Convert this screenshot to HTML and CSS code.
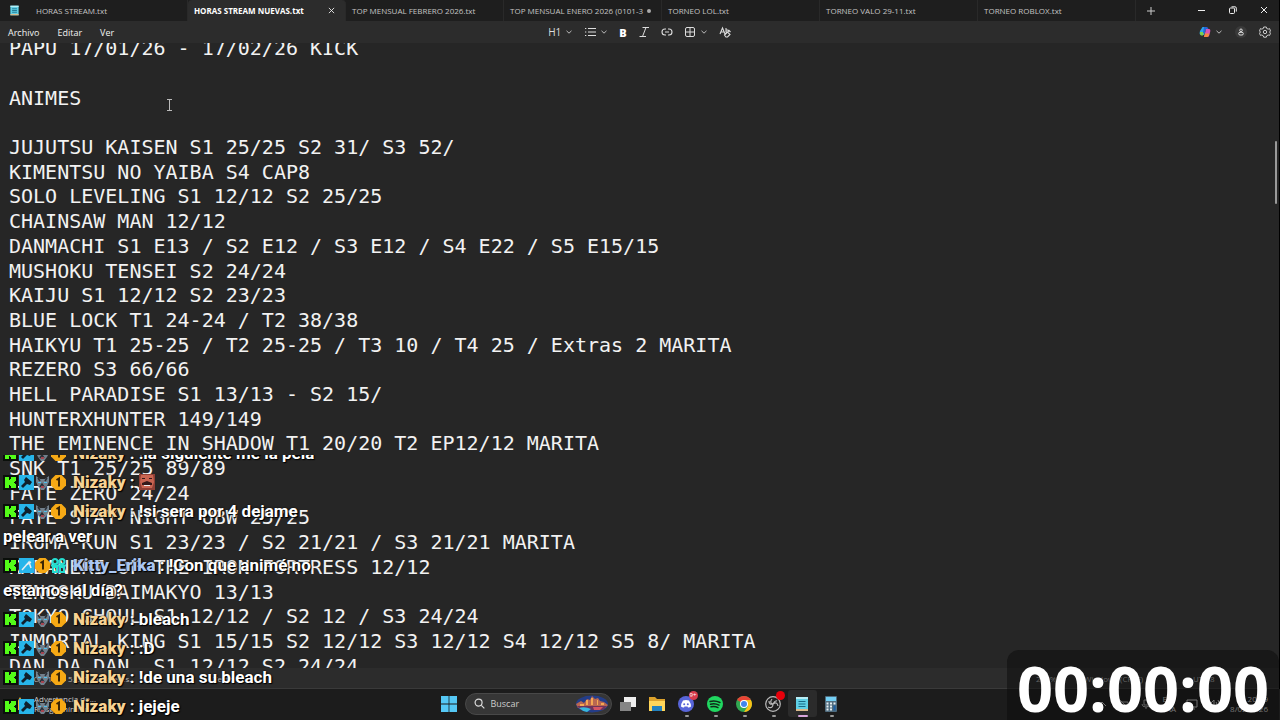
FILE: index.html
```html
<!DOCTYPE html>
<html lang="es">
<head>
    <meta charset="UTF-8">
    <meta name="viewport" content="width=device-width, initial-scale=1.0">
    <title>HORAS STREAM NUEVAS.txt</title>
    <link rel="stylesheet" href="styles.css">
</head>
<body>
    <!-- Shapes used more than once -->
    <svg class="defs" aria-hidden="true">
        <symbol id="chevron" viewBox="0 0 8 8"><path d="M1.5 2.8 4 5.2l2.5-2.4" fill="none" stroke="#bbb" stroke-width="1"/></symbol>
        <symbol id="notepad" viewBox="0 0 16 16">
            <path d="M2 1h12v14H2z" fill="#5fd0e6"/>
            <path d="M2 1h12v2H2z" fill="#b8eef6"/>
            <path d="M2 13h12v2H2z" fill="#d9b98a"/>
            <path d="M4.5 5.5h7M4.5 8h7M4.5 10.5h7" stroke="#176a86" stroke-width="1.2"/>
        </symbol>
        <symbol id="badge-kick" viewBox="0 0 15 15">
            <path d="M0 0h15v15H0z" fill="#0a0f0a"/>
            <path d="M2 2h4v3h1V4h1V2h5v4h-1v1h-1v1h1v1h1v4H8v-2H7v-1H6v3H2z" fill="#53fc18"/>
        </symbol>
        <symbol id="badge-mod" viewBox="0 0 15 15">
            <path d="M0 0h15v15H0z" fill="#27b5ea"/>
            <path d="m7 2 6 5-2 3-3-1-4 4-2-2 4-4-1-2z" fill="#10202c"/>
        </symbol>
        <symbol id="badge-sword" viewBox="0 0 15 15">
            <path d="M0 0h15v15H0z" fill="#27b5ea"/>
            <path d="M3 12 10 4l2 6M7 7l5-3" fill="none" stroke="#e5eef2" stroke-width="1.5"/>
        </symbol>
        <symbol id="badge-wolf" viewBox="0 0 15 15">
            <path d="m1 1 4 3h5l4-3v6l-2 4-3 4H6l-3-4-2-4z" fill="#72808c"/>
            <path d="m3 3 2 3M12 3l-2 3M5 12l2-3 2 3" fill="none" stroke="#2b3038" stroke-width="1.5"/>
            <path d="M3 7h3v1H3zM9 7h3v1H9z" fill="#4fc3ee"/>
            <path d="M6 11h3v2H6z" fill="#a54550"/>
        </symbol>
        <symbol id="badge-coin" viewBox="0 0 15 15">
            <path d="M4.500 0h6L15 4.500v6L10.500 15h-6L0 10.500v-6z" fill="#f6a915"/>
            <path d="M5.500 5 8 3.500v8" fill="none" stroke="#3b2605" stroke-width="2"/>
        </symbol>
        <symbol id="badge-group" viewBox="0 0 15 15">
            <g fill="none" stroke="#25ded0" stroke-width="2">
                <circle cx="4" cy="3.500" r="2.500"/><circle cx="11" cy="3.500" r="2.500"/>
                <path d="M0 7.500h15M2 9h4v5H2zM9 9h4v5H9z"/>
            </g>
        </symbol>
    </svg>

    <main class="window">
        <header class="tabs">
            <svg class="app-icon"><use href="#notepad"/></svg>
            <button class="tab">HORAS STREAM.txt</button>
            <button class="tab active">HORAS STREAM NUEVAS.txt
                <svg class="close" viewBox="0 0 8 8"><path d="m1 1 6 6M7 1 1 7" stroke="#eee" stroke-width="1"/></svg>
            </button>
            <button class="tab">TOP MENSUAL FEBRERO 2026.txt</button>
            <button class="tab">TOP MENSUAL ENERO 2026 (0101-3 <span class="unsaved"></span></button>
            <button class="tab">TORNEO LOL.txt</button>
            <button class="tab">TORNEO VALO 29-11.txt</button>
            <button class="tab">TORNEO ROBLOX.txt</button>
            <button class="new-tab" aria-label="Nueva"><svg viewBox="0 0 8 8"><path d="M4 0v8M0 4h8" stroke="#ccc"/></svg></button>
            <div class="controls">
                <button aria-label="Minimizar"><svg viewBox="0 0 8 8"><path d="M0 4.500h7" stroke="#eee"/></svg></button>
                <button aria-label="Restaurar"><svg viewBox="0 0 8 8"><rect x=".5" y="2" width="5" height="5.500" rx="1" fill="none" stroke="#eee"/><path d="M2.500 .8h3.500q1.300 0 1.300 1.300v3.500" fill="none" stroke="#eee"/></svg></button>
                <button aria-label="Cerrar"><svg viewBox="0 0 8 8"><path d="m1 1 6 6M7 1 1 7" stroke="#eee"/></svg></button>
            </div>
        </header>

        <nav class="toolbar">
            <div class="menus">
                <button>Archivo</button>
                <button>Editar</button>
                <button>Ver</button>
            </div>
            <div class="format">
                <button class="heading">H1 <svg class="chev"><use href="#chevron"/></svg></button>
                <button aria-label="Lista"><svg class="icon" viewBox="0 0 12 12"><path d="M4 2.500h8M4 6h8M4 9.500h8M1 2.500h1.300M1 6h1.300M1 9.500h1.300" stroke="#ddd" stroke-width="1"/></svg><svg class="chev"><use href="#chevron"/></svg></button>
                <button class="bold">B</button>
                <button aria-label="Cursiva"><svg class="icon" viewBox="0 0 12 12"><path d="M4.500 1.500H11M1.500 10.500H8M8 1.500l-3.500 9" stroke="#ddd" stroke-width="1"/></svg></button>
                <button aria-label="Vínculo"><svg class="icon" viewBox="0 0 12 12"><path d="M5 3H4a3 3 0 0 0 0 6h1M7 3h1a3 3 0 0 1 0 6H7M4 6h4" fill="none" stroke="#ddd" stroke-width="1.100"/></svg></button>
                <button aria-label="Tabla"><svg class="icon" viewBox="0 0 12 12"><rect x="1.500" y="1.500" width="9" height="9" rx="1.500" fill="none" stroke="#ddd"/><path d="M6 1.500v9M1.500 6h9" stroke="#ddd"/></svg><svg class="chev"><use href="#chevron"/></svg></button>
                <button aria-label="Borrar formato"><svg class="icon" viewBox="0 0 12 12"><path d="m1 8 2.500-6L6 8M2 6h3M7 2v4h1.500a1 1 0 0 0 0-2H7M9.500 4l2 2M5.500 9l3-3 2.500 2.500-2.500 2.500H7z" fill="none" stroke="#ddd" stroke-width="1.100"/></svg></button>
            </div>
            <div class="account">
                <button aria-label="Copilot"><svg class="icon" viewBox="0 0 12 12">
                    <path d="M3.500 1h4L5 9H2Q0 9 1 5z" fill="#2ba4ee"/>
                    <path d="M1 6h4L4 9.500H2Q.3 9 1 6z" fill="#7dce4a"/>
                    <path d="M7 3h3q2 0 1 3.500L10 10q-.5 1-2 1H5z" fill="#d854b7"/>
                    <path d="M6 7.500h4.500L9.500 10q-.5 1-1.500 1H5z" fill="#f5883b"/>
                    <path d="M5 1h2.500Q9 1 9.500 3H7L5.500 7H4z" fill="#2565d8"/>
                </svg><svg class="chev"><use href="#chevron"/></svg></button>
                <button class="user" aria-label="Cuenta"><svg class="icon" viewBox="0 0 12 12"><circle cx="6" cy="4.300" r="1.300" fill="none" stroke="#ddd"/><rect x="3.700" y="6.300" width="4.600" height="2.700" rx="1.300" fill="none" stroke="#ddd"/></svg></button>
                <button aria-label="Configuración"><svg class="icon" viewBox="0 0 12 12"><path d="m4.700 1-.4 1.500-1.500.6-1.400-.5L.5 5l1 1-1 1.200.9 2.200 1.400-.4 1.500.8.4 1.400h2.600l.4-1.400 1.500-.8 1.400.4.900-2.200-1-1.200 1-1-.9-2.400-1.400.5-1.500-.6L7.300 1z" fill="none" stroke="#ccc"/><circle cx="6" cy="6" r="1.700" fill="none" stroke="#ccc"/></svg></button>
            </div>
        </nav>

        <section class="editor">
            <div class="lines">
                <p>PAPU 17/01/26 - 17/02/26 KICK</p>
                <p></p>
                <p>ANIMES</p>
                <p></p>
                <p>JUJUTSU KAISEN S1 25/25 S2 31/ S3 52/</p>
                <p>KIMENTSU NO YAIBA S4 CAP8</p>
                <p>SOLO LEVELING S1 12/12 S2 25/25</p>
                <p>CHAINSAW MAN 12/12</p>
                <p>DANMACHI S1 E13 / S2 E12 / S3 E12 / S4 E22 / S5 E15/15</p>
                <p>MUSHOKU TENSEI S2 24/24</p>
                <p>KAIJU S1 12/12 S2 23/23</p>
                <p>BLUE LOCK T1 24-24 / T2 38/38</p>
                <p>HAIKYU T1 25-25 / T2 25-25 / T3 10 / T4 25 / Extras 2 MARITA</p>
                <p>REZERO S3 66/66</p>
                <p>HELL PARADISE S1 13/13 - S2 15/</p>
                <p>HUNTERXHUNTER 149/149</p>
                <p>THE EMINENCE IN SHADOW T1 20/20 T2 EP12/12 MARITA</p>
                <p>SNK T1 25/25 89/89</p>
                <p>FATE ZERO 24/24</p>
                <p>FATE STAY NIGHT UBW 25/25</p>
                <p>IRUMA-KUN S1 23/23 / S2 21/21 / S3 21/21 MARITA</p>
                <p>KABANERI OF THE IRON FORTRESS 12/12</p>
                <p>TENGOKU DAIMAKYO 13/13</p>
                <p>TOKYO GHOUL S1 12/12 / S2 12 / S3 24/24</p>
                <p>INMORTAL KING S1 15/15 S2 12/12 S3 12/12 S4 12/12 S5 8/ MARITA</p>
                <p>DAN DA DAN  S1 12/12 S2 24/24</p>
            </div>
            <div class="scrollbar"></div>
            <svg class="caret" viewBox="0 0 7 12"><path d="M1 .5h5M1 11.500h5M3.500 .5v11" stroke="#bbb"/></svg>
        </section>

        <footer class="status">
            <span class="position">Ln 20, Col 1</span>
            <span class="chars">5.220 caracteres.</span>
            <span class="kind">Texto</span>
            <span class="zoom">220%</span>
            <span class="eol">Windows (CRLF)</span>
            <span class="encoding">UTF-8</span>
        </footer>
    </main>

    <footer class="taskbar">
        <button class="widget">
            <svg viewBox="0 0 16 16"><path d="M8 1 15 14H1z" fill="#f2b632"/></svg>
            <span>Advertencia de...<br>Riesgo mínimo</span>
        </button>
        <div class="apps">
            <button class="app" aria-label="Inicio"><svg viewBox="0 0 16 16"><path d="M0 0h7.600v7.600H0zM8.400 0H16v7.600H8.400zM0 8.400h7.600V16H0zM8.400 8.400H16V16H8.400z" fill="#55c8f5"/></svg></button>
            <label class="search">
                <svg class="lens" viewBox="0 0 12 12"><circle cx="5" cy="5" r="3.800" fill="none" stroke="#ddd" stroke-width="1.300"/><path d="m8 8 3.300 3.300" stroke="#ddd" stroke-width="1.300"/></svg>
                <input type="text" placeholder="Buscar" aria-label="Buscar">
                <svg class="city" viewBox="0 0 34 18">
                    <ellipse cx="17" cy="9" rx="16" ry="8.500" fill="#243d88"/>
                    <path d="M1 9 6 6l3 2 3-4 3 1 2-4 3 3 3-1 2 3 4 1 4 3-3 3H3z" fill="#b96750"/>
                    <path d="M2 11h30l-4 4H6z" fill="#6d335c"/>
                    <path d="M11 5h2v5h-2zM16 3h2v7h-2zM22 5h1v5h-1zM5 9h4v2H5zM26 8h3v2h-3z" fill="#f4a854"/>
                    <path d="M4 13q6-2 12 1l-4 3q-5-1-8-4z" fill="#39b7dd"/>
                    <path d="M18 12h10l-3 3h-6z" fill="#d45564"/>
                </svg>
            </label>
            <button class="app" aria-label="Vista de tareas"><svg viewBox="0 0 16 16"><path d="M4 1h12v10H4z" fill="#eee"/><path d="M0 6h11v9H0z" fill="#858585"/></svg></button>
            <button class="app" aria-label="Explorador"><svg viewBox="0 0 16 16"><path d="M0 1h6l2 2h8v12H0z" fill="#dca22c"/><path d="M0 5h16v10H0z" fill="#ffd65a"/><path d="M3 10h10v5H3z" fill="#2382bf"/></svg></button>
            <button class="app running" aria-label="Discord"><svg viewBox="0 0 16 16"><circle cx="8" cy="8" r="8" fill="#5865d9"/><path d="M5 4.500q3-1 6 0 2 3 2 6-1.500 1.300-3 1l-.5-1h-3l-.5 1q-1.500.3-3-1 0-3 2-6z" fill="#fff"/><circle cx="6.200" cy="8.300" r="1" fill="#5865d9"/><circle cx="9.800" cy="8.300" r="1" fill="#5865d9"/></svg><span class="count">9+</span></button>
            <button class="app running" aria-label="Spotify"><svg viewBox="0 0 16 16"><circle cx="8" cy="8" r="8" fill="#20d760"/><path d="M3 5.500q5-1.500 10 1M3.500 8.200q4.500-1.200 8.500 1M4 10.800q4-1 7 .8" fill="none" stroke="#102a19" stroke-width="1.400" stroke-linecap="round"/></svg></button>
            <button class="app running" aria-label="Chrome"><svg viewBox="0 0 16 16"><circle cx="8" cy="8" r="8" fill="#31a852"/><path d="M8 8 1.100 4a8 8 0 0 1 13.800 0z" fill="#e84435"/><path d="M8 4h6.900A8 8 0 0 1 8 16l4-6z" fill="#fbc116"/><circle cx="8" cy="8" r="4" fill="#fff"/><circle cx="8" cy="8" r="3" fill="#4285ec"/></svg></button>
            <button class="app running" aria-label="OBS"><svg viewBox="0 0 16 16"><circle cx="8" cy="8" r="7.300" fill="#202020" stroke="#bbb" stroke-width="1.200"/><path d="M7 3q-3 4 1 5 4-3 5 2M8 8q0 5-5 3M12 5q-2-1-4 3M4 5q0 4 4 3" fill="none" stroke="#bbb" stroke-width="1.200"/></svg><span class="count rec"></span></button>
            <button class="app running current" aria-label="Bloc de notas"><svg><use href="#notepad"/></svg></button>
            <button class="app running" aria-label="Calculadora"><svg viewBox="0 0 16 16"><rect x="2" width="12" height="16" rx="1" fill="#506c7e"/><path d="M3 1h10v4H3z" fill="#73cff4"/><path d="M3.500 6.500h2v2h-2zM7 6.500h2v2H7zM3.500 9.500h2v2h-2zM7 9.500h2v2H7zM3.500 12.500h2v2h-2zM7 12.500h2v2H7zM10.500 6.500h2v2h-2z" fill="#e6eef2"/><path d="M10.500 9.500h2v5h-2z" fill="#1b5fa5"/></svg></button>
        </div>
        <div class="tray">
            <svg class="icon" viewBox="0 0 12 12"><path d="m2 8 4-4 4 4" fill="none" stroke="#ddd"/></svg>
            <svg class="icon" viewBox="0 0 12 12"><path d="M2 4h8v6H2zM1 1l10 10" fill="none" stroke="#bbb"/></svg>
            <svg class="icon" viewBox="0 0 12 12"><path d="M4 2h4v5H4zM2 6q0 3 4 3t4-3M6 9v2" fill="none" stroke="#bbb"/></svg>
            <span>ESP<br>LAA</span>
            <svg class="icon" viewBox="0 0 12 12"><path d="M1 2h10v7H1zM3 11h6" fill="none" stroke="#ddd"/></svg>
            <svg class="icon" viewBox="0 0 12 12"><path d="M1 5h2l3-3v8L3 7H1zM8 4q2 2 0 4M10 2q3 4 0 8" fill="none" stroke="#ddd"/></svg>
            <span class="clock">20:59<br>8/02/2026</span>
        </div>
    </footer>

    <!-- Stream overlays -->
    <aside class="chat">
        <p><svg><use href="#badge-kick"/></svg><svg><use href="#badge-mod"/></svg><svg><use href="#badge-wolf"/></svg><svg><use href="#badge-coin"/></svg><b>Nizaky</b> : !la siguiente me la pela</p>
        <p><svg><use href="#badge-kick"/></svg><svg><use href="#badge-mod"/></svg><svg><use href="#badge-wolf"/></svg><svg><use href="#badge-coin"/></svg><b>Nizaky</b> : <svg class="emote" viewBox="0 0 16 16"><path d="M0 0h16v16H0z" fill="#8f3f35"/><path d="M2 1h12l1 7-2 6H3L1 8z" fill="#c96552"/><path d="M3 4h3v1H3zM10 4h3v1h-3zM3 9l5-2 5 2v2H3z" fill="#35191a"/><path d="M5 11h6v1H5z" fill="#eee"/></svg></p>
        <p><svg><use href="#badge-kick"/></svg><svg><use href="#badge-mod"/></svg><svg><use href="#badge-wolf"/></svg><svg><use href="#badge-coin"/></svg><b>Nizaky</b> : !si sera por 4 dejame pelear a ver</p>
        <p><svg><use href="#badge-kick"/></svg><svg><use href="#badge-sword"/></svg><svg><use href="#badge-coin"/></svg><svg><use href="#badge-group"/></svg><b class="kitty">Kitty_Erika</b> : !Con que animé no estamos al día?</p>
        <p><svg><use href="#badge-kick"/></svg><svg><use href="#badge-mod"/></svg><svg><use href="#badge-wolf"/></svg><svg><use href="#badge-coin"/></svg><b>Nizaky</b> : bleach</p>
        <p><svg><use href="#badge-kick"/></svg><svg><use href="#badge-mod"/></svg><svg><use href="#badge-wolf"/></svg><svg><use href="#badge-coin"/></svg><b>Nizaky</b> : :D</p>
        <p><svg><use href="#badge-kick"/></svg><svg><use href="#badge-mod"/></svg><svg><use href="#badge-wolf"/></svg><svg><use href="#badge-coin"/></svg><b>Nizaky</b> : !de una su bleach</p>
        <p><svg><use href="#badge-kick"/></svg><svg><use href="#badge-mod"/></svg><svg><use href="#badge-wolf"/></svg><svg><use href="#badge-coin"/></svg><b>Nizaky</b> : jejeje</p>
    </aside>
    <div class="timer">00:00:00</div>
</body>
</html>
```
FILE: styles.css
```css
* {
    box-sizing: border-box;
}

body {
    margin: 0;
    height: 100vh;
    display: flex;
    flex-direction: column;
    position: relative;
    overflow: hidden;
    background-color: #262626;
    color: #ddd;
    font-family: "Open Sans", "Noto Sans", sans-serif;
    font-size: 8px;
}

button {
    display: flex;
    align-items: center;
    padding: 0;
    border: none;
    background: none;
    color: inherit;
    font: inherit;
    white-space: nowrap;
}

p {
    margin: 0;
}

svg {
    flex: none;
}

.defs {
    position: absolute;
    width: 0;
    height: 0;
}

.window {
    flex: 1;
    min-height: 0;
    display: flex;
    flex-direction: column;
    border-right: 1px solid #000;
}

/* Tabs */
.tabs {
    height: 21px;
    display: flex;
    background-color: #1e1e1e;
}

.app-icon {
    width: 11px;
    height: 11px;
    margin: 5px 10px 0 9px;
}

.tab {
    flex: 0 1 158px;
    justify-content: space-between;
    padding: 0 10px 0 6px;
    border-right: 1px solid #292929;
    color: #c4c4c4;
}

.tab.active {
    background-color: #2c2c2c;
    border-radius: 4px 4px 0 0;
    color: #fff;
    font-weight: bold;
}

.close {
    width: 7px;
    height: 7px;
}

.unsaved {
    width: 4px;
    height: 4px;
    border-radius: 50%;
    background-color: #aaa;
}

.new-tab {
    padding: 0 11px;
}

.new-tab svg,
.controls svg {
    width: 8px;
    height: 8px;
}

.controls {
    display: flex;
    margin-left: auto;
    padding-bottom: 2px;
}

.controls button {
    width: 31px;
    justify-content: center;
}

/* Toolbar */
.toolbar {
    height: 22px;
    display: grid;
    grid-template-columns: 1fr auto 1fr;
    align-items: center;
    padding: 0 8px;
    background-color: #2c2c2c;
}

.menus {
    display: flex;
    gap: 18px;
    color: #f2f2f2;
    font-size: 9px;
}

.format {
    display: flex;
    align-items: center;
    gap: 11px;
}

.icon {
    width: 12px;
    height: 12px;
}

.chev {
    width: 8px;
    height: 8px;
    margin-left: 4px;
}

.heading {
    font-size: 10px;
}

.bold {
    color: #fff;
    font-size: 11px;
    font-weight: 800;
}

.account {
    display: flex;
    justify-content: flex-end;
    gap: 12px;
}

.user {
    border-radius: 50%;
    background-color: #3a3a3a;
}

/* Editor */
.editor {
    flex: 1;
    min-height: 0;
    display: flex;
    position: relative;
    overflow: hidden;
}

.lines {
    flex: 1;
    display: grid;
    grid-auto-rows: 1fr;
    align-items: center;
    margin: -7px 0 -10px 9px;
    color: #f2f2f2;
    font-family: "DejaVu Sans Mono", "Liberation Mono", monospace;
    font-size: 20px;
    line-height: 24px;
    white-space: pre;
}

.scrollbar {
    width: 2px;
    height: 63px;
    margin: 98px 2px 0 0;
    border-radius: 1px;
    background-color: #9a9a9a;
}

.caret {
    position: absolute;
    left: 166px;
    top: 56px;
    width: 7px;
    height: 12px;
}

/* Status bar */
.status {
    height: 21px;
    display: flex;
    align-items: center;
    padding-left: 9px;
    background-color: #2c2c2c;
    border-bottom: 1px solid #3a3a3a;
    color: #bbb;
}

.position {
    width: 59px;
}

.chars {
    width: 145px;
}

.zoom {
    width: 48px;
    margin-left: auto;
}

.eol {
    width: 109px;
}

.encoding {
    width: 86px;
}

/* Taskbar */
.taskbar {
    height: 31px;
    display: grid;
    grid-template-columns: 1fr auto 1fr;
    align-items: center;
    padding: 0 12px 2px;
    background-color: #1c1c1c;
}

.widget {
    gap: 6px;
    color: #ccc;
    line-height: 10px;
    text-align: left;
}

.widget svg {
    width: 16px;
    height: 16px;
}

.apps {
    display: flex;
    align-items: center;
}

.app {
    position: relative;
    width: 29px;
    height: 27px;
    justify-content: center;
}

.app svg {
    width: 16px;
    height: 16px;
}

.app.running::after {
    content: "";
    position: absolute;
    bottom: 0;
    left: 13px;
    width: 4px;
    height: 2px;
    border-radius: 1px;
    background-color: #999;
}

.app.current {
    border-radius: 3px;
    background-color: #2b2b2b;
}

.app.current::after {
    left: 10px;
    width: 10px;
    background-color: #d8a5dc;
}

.count {
    position: absolute;
    top: 1px;
    right: 3px;
    width: 9px;
    height: 9px;
    border-radius: 50%;
    background-color: #d83c4e;
    color: #fff;
    font-size: 6px;
    line-height: 9px;
    text-align: center;
}

.rec {
    background-color: #e8000b;
}

.search {
    width: 147px;
    height: 22px;
    display: flex;
    align-items: center;
    margin: 0 2px 0 1px;
    padding: 0 2px 0 8px;
    border: 1px solid #484848;
    border-radius: 11px;
    background-color: #363636;
}

.lens {
    width: 11px;
    height: 11px;
}

.search input {
    flex: 1;
    min-width: 0;
    padding: 0 0 0 6px;
    border: none;
    outline: none;
    background: none;
    color: #ddd;
    font: inherit;
    font-size: 9px;
}

.search input::placeholder {
    color: #ccc;
}

.city {
    width: 34px;
    height: 18px;
}

.tray {
    display: flex;
    align-items: center;
    justify-content: flex-end;
    gap: 10px;
    line-height: 10px;
    text-align: right;
}

/* Chat overlay */
.chat {
    position: absolute;
    left: 3px;
    bottom: 0;
    width: 316px;
    height: 265px;
    display: flex;
    flex-direction: column;
    justify-content: flex-end;
    gap: 4px;
    padding-bottom: 1px;
    overflow: hidden;
    color: #fff;
    font-family: Roboto, sans-serif;
    font-size: 17px;
    font-weight: 700;
    line-height: 25px;
    text-shadow: 0 0 2px #000, 1px 1px 1px #000;
}

.chat p {
    flex: none;
}

.chat svg {
    width: 15px;
    height: 15px;
    margin-right: 1px;
    vertical-align: -2px;
}

.chat b {
    margin-left: 6px;
    color: #f7d393;
}

.chat .kitty {
    color: #a9c6f2;
}

.chat .emote {
    width: 16px;
    height: 16px;
}

/* Timer overlay */
.timer {
    position: absolute;
    right: 1px;
    bottom: 0;
    height: 70px;
    padding: 0 10px;
    border-radius: 12px 12px 0 0;
    background-color: rgba(10, 10, 10, 0.5);
    color: #fff;
    font-size: 63px;
    font-weight: 700;
    line-height: 76px;
}
```
